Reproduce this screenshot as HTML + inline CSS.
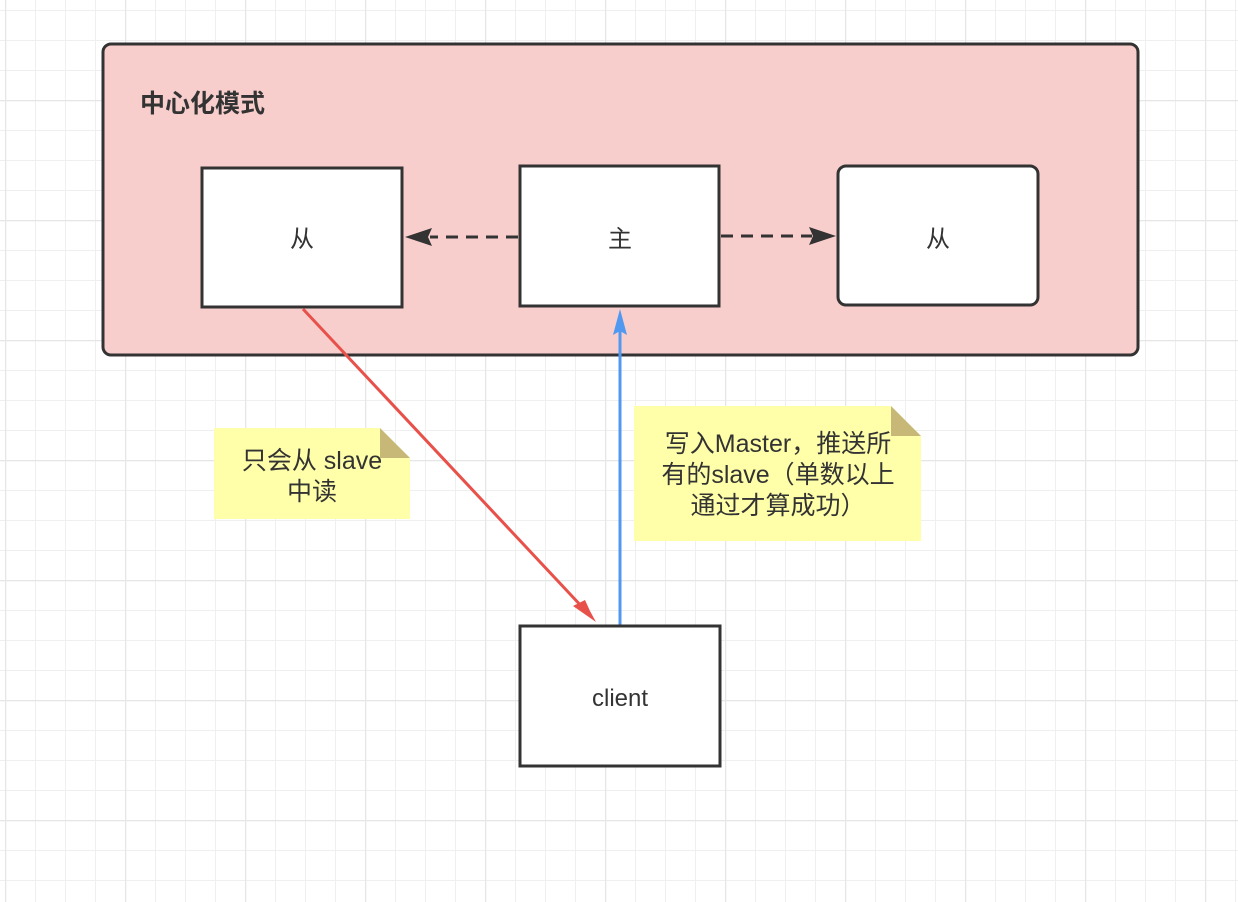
<!DOCTYPE html>
<html><head><meta charset="utf-8"><style>
html,body{margin:0;padding:0;background:#fff;}
svg{display:block;}
text{font-family:"Liberation Sans","Noto Sans CJK SC",sans-serif;fill:#333;}
</style></head><body>
<svg width="1238" height="902" viewBox="0 0 1238 902" xmlns="http://www.w3.org/2000/svg">
<defs>
<pattern id="minor" x="5" y="10" width="30" height="30" patternUnits="userSpaceOnUse">
<path d="M0 0H30M0 0V30" stroke="#efefef" stroke-width="2" fill="none"/>
</pattern>
<pattern id="major" x="5" y="100" width="120" height="120" patternUnits="userSpaceOnUse">
<path d="M0 0H120M0 0V120" stroke="#e6e6e6" stroke-width="2.5" fill="none"/>
</pattern>
</defs>
<rect width="1238" height="902" fill="url(#minor)"/>
<rect width="1238" height="902" fill="url(#major)"/>

<rect x="103" y="44" width="1035" height="311" rx="8" fill="#f8cecc" stroke="#333" stroke-width="3"/>
<text x="140" y="112" font-size="25" font-weight="bold">中心化模式</text>

<rect x="202" y="168" width="200" height="139" fill="#fff" stroke="#333" stroke-width="3"/>
<text x="302" y="247" font-size="24" text-anchor="middle">从</text>
<rect x="520" y="166" width="199" height="140" fill="#fff" stroke="#333" stroke-width="3"/>
<text x="620" y="247" font-size="24" text-anchor="middle">主</text>
<rect x="838" y="166" width="200" height="139" rx="8" fill="#fff" stroke="#333" stroke-width="3"/>
<text x="938" y="247" font-size="24" text-anchor="middle">从</text>

<path d="M518 237H430" stroke="#333" stroke-width="3" stroke-dasharray="12 8" fill="none"/>
<path d="M405 237L432 228L428 237L432 246Z" fill="#333"/>
<path d="M721 236H812" stroke="#333" stroke-width="3" stroke-dasharray="12 8" fill="none"/>
<path d="M836 236L809 227L813 236L809 245Z" fill="#333"/>

<path d="M303 309L585 610" stroke="#e8514a" stroke-width="3" fill="none"/>
<path d="M596 622L573 606L585 600L590 611Z" fill="#e8514a"/>
<path d="M620 626V330" stroke="#5098f0" stroke-width="3" fill="none"/>
<path d="M620 309L613 335L620 331L627 335Z" fill="#5098f0"/>

<path d="M214 428H380L410 458V519H214Z" fill="#ffffaa"/>
<path d="M380 428L410 458H380Z" fill="#c8b878"/>
<text x="312" y="469" font-size="25" text-anchor="middle">只会从 slave</text>
<text x="312" y="500" font-size="25" text-anchor="middle">中读</text>

<path d="M634 406H891L921 436V541H634Z" fill="#ffffaa"/>
<path d="M891 406L921 436H891Z" fill="#c8b878"/>
<text x="778" y="452" font-size="25" text-anchor="middle">写入Master，推送所</text>
<text x="778" y="483" font-size="25" text-anchor="middle">有的slave（单数以上</text>
<text x="778" y="514" font-size="25" text-anchor="middle">通过才算成功）</text>

<rect x="520" y="626" width="200" height="140" fill="#fff" stroke="#333" stroke-width="3"/>
<text x="620" y="706" font-size="24" text-anchor="middle">client</text>
</svg>
</body></html>
